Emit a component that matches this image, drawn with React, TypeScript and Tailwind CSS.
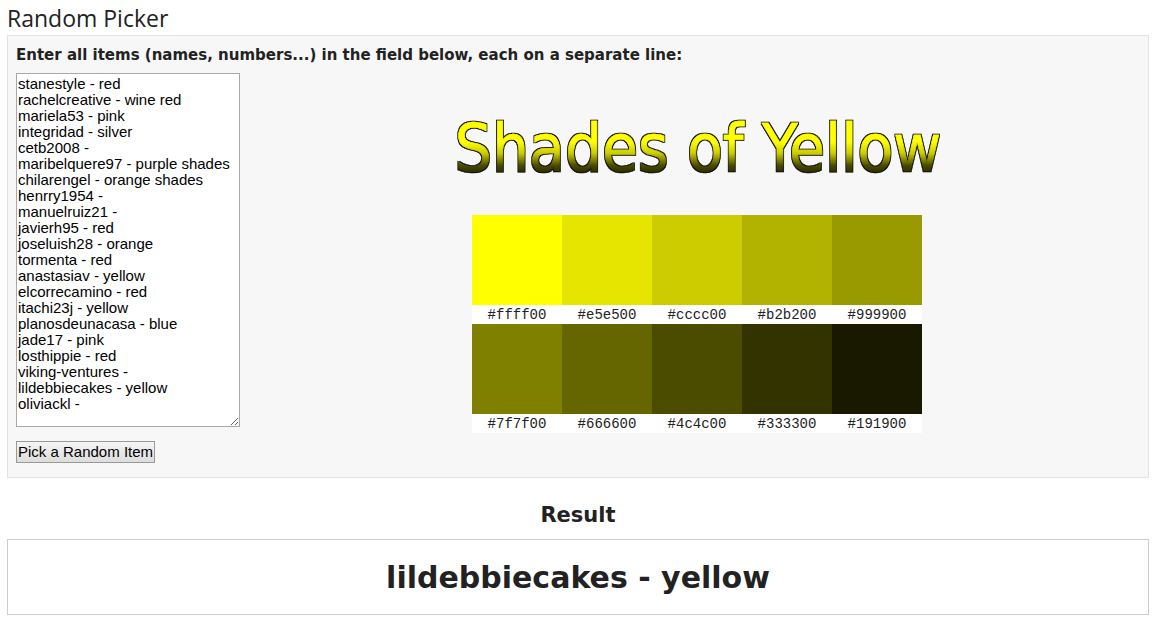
import React, { useState } from 'react';

const initialItems = [
  'stanestyle - red',
  'rachelcreative - wine red',
  'mariela53 - pink',
  'integridad - silver',
  'cetb2008 -',
  'maribelquere97 - purple shades',
  'chilarengel - orange shades',
  'henrry1954 -',
  'manuelruiz21 -',
  'javierh95 - red',
  'joseluish28 - orange',
  'tormenta - red',
  'anastasiav - yellow',
  'elcorrecamino - red',
  'itachi23j - yellow',
  'planosdeunacasa - blue',
  'jade17 - pink',
  'losthippie - red',
  'viking-ventures -',
  'lildebbiecakes - yellow',
  'oliviackl -',
];

const shades = [
  { hex: '#ffff00', bg: 'bg-[#ffff00]' },
  { hex: '#e5e500', bg: 'bg-[#e5e500]' },
  { hex: '#cccc00', bg: 'bg-[#cccc00]' },
  { hex: '#b2b200', bg: 'bg-[#b2b200]' },
  { hex: '#999900', bg: 'bg-[#999900]' },
  { hex: '#7f7f00', bg: 'bg-[#7f7f00]' },
  { hex: '#666600', bg: 'bg-[#666600]' },
  { hex: '#4c4c00', bg: 'bg-[#4c4c00]' },
  { hex: '#333300', bg: 'bg-[#333300]' },
  { hex: '#191900', bg: 'bg-[#191900]' },
];

const ShadesLogo: React.FC = () => (
  <svg width="520" height="84" viewBox="0 0 520 84" role="img" aria-label="Shades of Yellow">
    <defs>
      <linearGradient id="yellowFade" gradientUnits="userSpaceOnUse" x1="0" y1="10" x2="0" y2="62">
        <stop offset="0" stopColor="#ffff00" />
        <stop offset="0.4" stopColor="#ffff00" />
        <stop offset="0.62" stopColor="#cccc00" />
        <stop offset="0.85" stopColor="#4c4c00" />
        <stop offset="1" stopColor="#2a2a00" />
      </linearGradient>
      {/* dark rim round the letters */}
      <filter id="rim" filterUnits="userSpaceOnUse" x="0" y="0" width="520" height="84">
        <feMorphology in="SourceAlpha" operator="dilate" radius="1" result="grown" />
        <feFlood floodColor="#111111" />
        <feComposite in2="grown" operator="in" result="outline" />
        <feMerge>
          <feMergeNode in="outline" />
          <feMergeNode in="SourceGraphic" />
        </feMerge>
      </filter>
    </defs>
    <text
      x="261"
      y="60"
      textAnchor="middle"
      fill="url(#yellowFade)"
      stroke="url(#yellowFade)"
      strokeWidth="0.5"
      filter="url(#rim)"
      className="font-['DejaVu_Sans_Condensed','DejaVu_Sans',sans-serif] text-[65px]"
    >
      Shades of Yellow
    </text>
  </svg>
);

export default function App() {
  const [items, setItems] = useState(initialItems.join('\n'));
  const [result, setResult] = useState('lildebbiecakes - yellow');

  const pickItem = () => {
    const lines = items.split('\n').filter((line) => line.trim() !== '');
    if (lines.length > 0) {
      setResult(lines[Math.floor(Math.random() * lines.length)]);
    }
  };

  return (
    <main className="bg-white pt-[3px] pr-[9px] pb-2 pl-[7px] font-['DejaVu_Sans',sans-serif] text-[#222222]">
      <h1 className="h-8 font-['Open_Sans',sans-serif] text-[23px] leading-[30px]">Random Picker</h1>

      <section className="border border-[#e3e3e3] bg-[#f7f7f7] px-2 pt-[9px] pb-[14px]">
        <label htmlFor="items" className="block pb-2 text-[15px] leading-5 font-bold">
          Enter all items (names, numbers...) in the field below, each on a separate line:
        </label>

        <div className="flex gap-[14px]">
          <div className="flex shrink-0 flex-col items-start gap-[14px]">
            <textarea
              id="items"
              value={items}
              onChange={(e) => setItems(e.target.value)}
              spellCheck={false}
              className="block h-[354px] w-56 resize border border-[#a9a9a9] bg-white px-px py-0.5 font-['Liberation_Sans',sans-serif] text-[15px] leading-4 text-black outline-none"
            />
            <button
              type="button"
              onClick={pickItem}
              className="border border-[#999999] bg-linear-to-b from-[#f5f5f5] to-[#dddddd] px-px font-['Liberation_Sans',sans-serif] text-[15px] leading-5 text-black"
            >
              Pick a Random Item
            </button>
          </div>

          <div className="flex grow flex-col items-center gap-5 pt-[38px]">
            <ShadesLogo />
            <ul className="grid w-[450px] grid-cols-5 bg-white">
              {shades.map((shade) => (
                <li key={shade.hex}>
                  <div className={`h-[90px] ${shade.bg}`} />
                  <p className="pt-0.5 text-center font-['Liberation_Mono',monospace] text-[14px] leading-[17px] text-[#222222]">
                    {shade.hex}
                  </p>
                </li>
              ))}
            </ul>
          </div>
        </div>
      </section>

      <h2 className="pt-[23px] pb-[10px] text-center text-[21px] leading-7 font-bold">Result</h2>
      <output
        htmlFor="items"
        className="block border border-[#cccccc] pt-5 pb-[18px] text-center text-[30px] leading-9 font-bold"
      >
        {result}
      </output>
    </main>
  );
}
